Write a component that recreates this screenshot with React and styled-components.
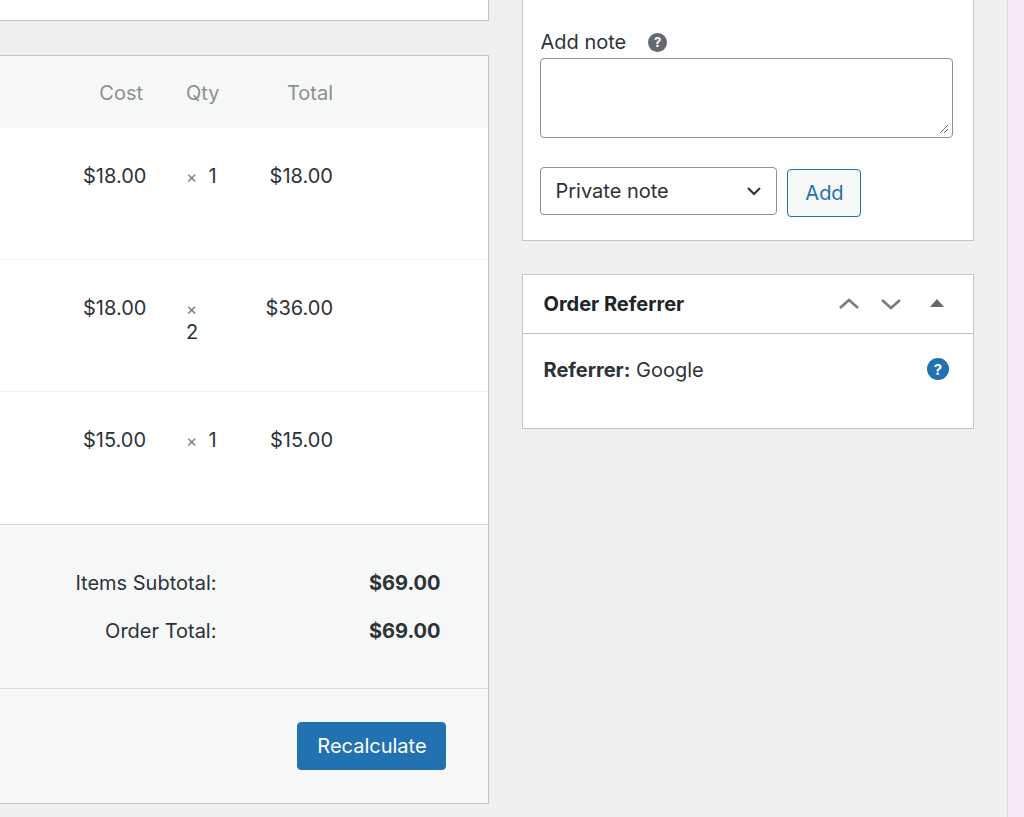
import React from "react";
import styled, { createGlobalStyle } from "styled-components";

const G = createGlobalStyle`
  body{margin:0;background:#f0f0f1;font-family:Inter,"Open Sans",sans-serif;color:#2c3338;}
`;
const Page = styled.div`display:flex;height:817px;overflow:hidden;`;
const Left = styled.div`width:490px;display:flex;flex-direction:column;`;
const TopStub = styled.div`height:20px;background:#fff;border-right:1px solid #c3c4c7;border-bottom:1px solid #c3c4c7;`;
const Main = styled.div`margin-top:34px;background:#fff;border:1px solid #c3c4c7;border-left:none;height:747px;display:flex;flex-direction:column;`;
const Row = styled.div`display:grid;grid-template-columns:83px 60px 43px 34px 113px;align-items:start;height:${p=>p.h}px;padding-top:${p=>p.pt}px;box-sizing:border-box;background:${p=>p.bg||"#fff"};border-bottom:1px solid ${p=>p.bc||"#f0f0f1"};font-size:20px;color:${p=>p.c||"#2c3338"};`;
const R = styled.span`text-align:right;white-space:nowrap;`;
const X = styled.span`color:#787c82;font-size:17px;`;
const Totals = styled.div`background:#f6f7f7;height:165px;border-top:1px solid #dcdcde;border-bottom:1px solid #dcdcde;box-sizing:border-box;padding:46px 48px 0 0;display:grid;grid-template-columns:1fr 224px;row-gap:24px;font-size:20px;align-content:start;`;
const TL = styled.span`text-align:right;`;
const TV = styled.span`text-align:right;font-weight:700;`;
const Foot = styled.div`flex:1;background:#f6f7f7;display:flex;justify-content:flex-end;padding:33px 42px 0 0;align-items:flex-start;`;
const Primary = styled.button`background:#2271b1;border:1px solid #2271b1;color:#fff;border-radius:4px;height:48px;width:149px;font:20px Inter,sans-serif;`;
const Right = styled.div`margin-left:33px;width:452px;display:flex;flex-direction:column;gap:33px;`;
const Box = styled.div`background:#fff;border:1px solid #c3c4c7;border-top:${p=>p.nt?"none":"1px solid #c3c4c7"};`;
const NoteBody = styled.div`padding:30px 20px 23px 17px;`;
const Label = styled.div`font-size:20px;display:flex;align-items:center;gap:22px;height:24px;`;
const Help = styled.span`width:19px;height:19px;border-radius:50%;background:${p=>p.bg};color:#fff;font-size:13px;font-weight:700;display:inline-flex;align-items:center;justify-content:center;`;
const Area = styled.div`margin-top:4px;height:80px;border:1px solid #8c8f94;border-radius:4px;box-sizing:border-box;position:relative;`;
const Grip = styled.svg`position:absolute;right:3px;bottom:3px;`;
const Controls = styled.div`display:flex;gap:10px;margin-top:29px;align-items:flex-start;`;
const Select = styled.div`width:237px;height:48px;border:1px solid #8c8f94;border-radius:4px;box-sizing:border-box;display:flex;align-items:center;justify-content:space-between;padding:0 12px 0 14px;font-size:20px;`;
const Sec = styled.button`width:74px;height:48px;border:1px solid #2271b1;border-radius:4px;background:#f6f7f7;color:#2271b1;font:20px Inter,sans-serif;margin-top:2px;`;
const Head = styled.div`height:58px;border-bottom:1px solid #c3c4c7;display:flex;align-items:center;padding:0 20px;`;
const Title = styled.div`font-size:20px;font-weight:700;flex:1;color:#1d2327;`;
const Icons = styled.div`display:flex;gap:18px;align-items:center;`;
const RefBody = styled.div`height:94px;padding:24px 24px 0 20px;box-sizing:border-box;display:flex;justify-content:space-between;font-size:20px;`;
const Strip = styled.div`margin-left:33px;width:16px;background:#f7e9f8;border-left:1px solid #e6d3e8;`;

const Item = ({c,q,t,last})=>(
  <Row h={132} pt={36} bc={last?"#fff":undefined}><span/><R>{c}</R><span/><span><X>×</X>&nbsp; {q}</span><R>{t}</R></Row>
);

export default function App(){
  return <Page><G/>
    <Left>
      <TopStub/>
      <Main>
        <Row h={72} pt={25} bg="#f6f7f7" bc="#f6f7f7" c="#8c8f94"><span/><R>Cost</R><span/><span>Qty</span><R>Total</R></Row>
        <Item c="$18.00" q={1} t="$18.00"/>
        <Item c="$18.00" q={2} t="$36.00"/>
        <Item c="$15.00" q={1} t="$15.00" last/>
        <Totals><TL>Items Subtotal:</TL><TV>$69.00</TV><TL>Order Total:</TL><TV>$69.00</TV></Totals>
        <Foot><Primary>Recalculate</Primary></Foot>
      </Main>
    </Left>
    <Right>
      <Box nt><NoteBody>
        <Label>Add note <Help bg="#646970">?</Help></Label>
        <Area><Grip width="12" height="12"><path d="M11 3L3 11M11 7L7 11" stroke="#646970" strokeWidth="1"/></Grip></Area>
        <Controls>
          <Select>Private note<svg width="20" height="20" viewBox="0 0 20 20"><path d="M4 7l6 6 6-6" fill="none" stroke="#2c3338" strokeWidth="2"/></svg></Select>
          <Sec>Add</Sec>
        </Controls>
      </NoteBody></Box>
      <Box>
        <Head><Title>Order Referrer</Title>
          <Icons>
            <svg width="24" height="24" viewBox="0 0 24 24"><path d="M3 16l9-8 9 8" fill="none" stroke="#787c82" strokeWidth="2.6"/></svg>
            <svg width="24" height="24" viewBox="0 0 24 24"><path d="M3 8l9 8 9-8" fill="none" stroke="#787c82" strokeWidth="2.6"/></svg>
            <svg width="32" height="24" viewBox="0 0 32 24"><path d="M16 7l7 8H9z" fill="#646970"/></svg>
          </Icons>
        </Head>
        <RefBody><span><b>Referrer:</b> Google</span><Help bg="#2271b1" style={{width:22,height:22,fontSize:15}}>?</Help></RefBody>
      </Box>
    </Right>
    <Strip/>
  </Page>;
}
